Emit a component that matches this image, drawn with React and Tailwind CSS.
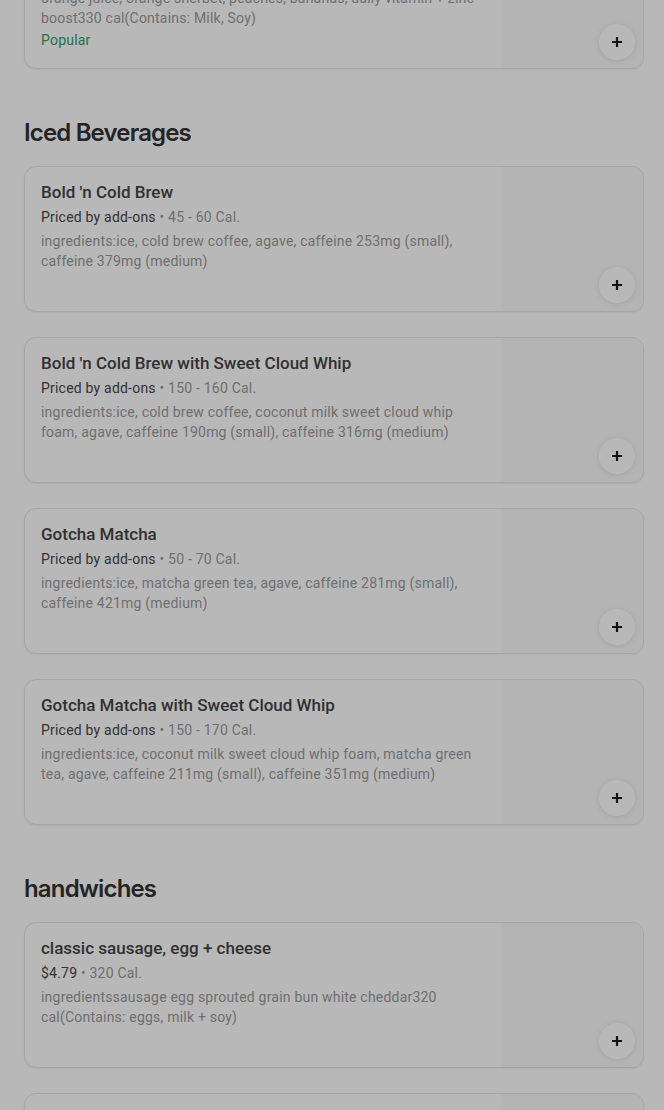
import React from 'react';

const SECTIONS = [
  {
    id: 'smoothies',
    title: null,
    items: [
      {
        name: 'Orange Sunrise Smoothie',
        price: '$6.49',
        cal: '330 Cal.',
        desc: 'orange juice, orange sherbet, peaches, bananas, daily vitamin + zinc boost330 cal(Contains: Milk, Soy)',
        popular: true,
      },
    ],
  },
  {
    id: 'iced',
    title: 'Iced Beverages',
    items: [
      {
        name: "Bold 'n Cold Brew",
        price: 'Priced by add-ons',
        cal: '45 - 60 Cal.',
        desc: 'ingredients:ice, cold brew coffee, agave, caffeine 253mg (small), caffeine 379mg (medium)',
      },
      {
        name: "Bold 'n Cold Brew with Sweet Cloud Whip",
        price: 'Priced by add-ons',
        cal: '150 - 160 Cal.',
        desc: 'ingredients:ice, cold brew coffee, coconut milk sweet cloud whip foam, agave, caffeine 190mg (small), caffeine 316mg (medium)',
      },
      {
        name: 'Gotcha Matcha',
        price: 'Priced by add-ons',
        cal: '50 - 70 Cal.',
        desc: 'ingredients:ice, matcha green tea, agave, caffeine 281mg (small), caffeine 421mg (medium)',
      },
      {
        name: 'Gotcha Matcha with Sweet Cloud Whip',
        price: 'Priced by add-ons',
        cal: '150 - 170 Cal.',
        desc: 'ingredients:ice, coconut milk sweet cloud whip foam, matcha green tea, agave, caffeine 211mg (small), caffeine 351mg (medium)',
      },
    ],
  },
  {
    id: 'handwiches',
    title: 'handwiches',
    items: [
      {
        name: 'classic sausage, egg + cheese',
        price: '$4.79',
        cal: '320 Cal.',
        desc: 'ingredientssausage egg sprouted grain bun white cheddar320 cal(Contains: eggs, milk + soy)',
      },
      {
        name: 'turkey sausage, egg + cheese',
        price: '$4.79',
        cal: '290 Cal.',
        desc: 'ingredientsturkey sausage egg sprouted grain bun white cheddar',
      },
    ],
  },
];

function PlusIcon() {
  return (
    <svg width="12" height="12" viewBox="0 0 12 12" fill="none">
      <path d="M6 1v10M1 6h10" stroke="#1a1a1a" strokeWidth="2.2" />
    </svg>
  );
}

function MenuCard({ item }) {
  return (
    <div className="flex h-[146px] overflow-hidden rounded-xl border border-[#e6e6e6] bg-white shadow-[0_1px_2px_rgba(0,0,0,0.06)]">
      <div className="min-w-0 flex-1 pl-4 pr-5 pt-[13px] font-['Roboto','Liberation_Sans',sans-serif]">
        <div className="text-[17px] font-medium leading-6 text-[#444]">{item.name}</div>
        <div className="mt-[3px] text-[14px] leading-5 tracking-[0.015em]">
          <span className="text-[#474747]">{item.price}</span>
          <span className="text-[#9a9a9a]"> • {item.cal}</span>
        </div>
        <p className="mt-1 text-[14px] leading-5 tracking-[0.015em] text-[#9a9a9a]">{item.desc}</p>
        {item.popular && <div className="mt-0.5 text-[14px] leading-5 tracking-[0.015em] text-[#2f9e68]">Popular</div>}
      </div>
      <div className="relative w-[142px] shrink-0 bg-[#fafafa]">
        <button className="absolute bottom-2 right-2 flex h-9 w-9 items-center justify-center rounded-full bg-white shadow-[0_1px_6px_rgba(0,0,0,0.1)]">
          <PlusIcon />
        </button>
      </div>
    </div>
  );
}

export default function App() {
  return (
    <div className="relative h-[1110px] overflow-hidden bg-white font-['Inter','Liberation_Sans',sans-serif]">
      <div className="-mt-[77px] pl-6 pr-5">
        {SECTIONS.map((section) => (
          <section key={section.id} className="mb-12">
            {section.title && (
              <h2 className="mb-[17px] text-[24px] font-semibold leading-8 tracking-[-0.035em] text-[#333]">
                {section.title}
              </h2>
            )}
            <div className="flex flex-col gap-[25px]">
              {section.items.map((item) => (
                <MenuCard key={item.name} item={item} />
              ))}
            </div>
          </section>
        ))}
      </div>

      {/* modal backdrop */}
      <div className="absolute inset-0 bg-black/[0.28]" />
    </div>
  );
}
